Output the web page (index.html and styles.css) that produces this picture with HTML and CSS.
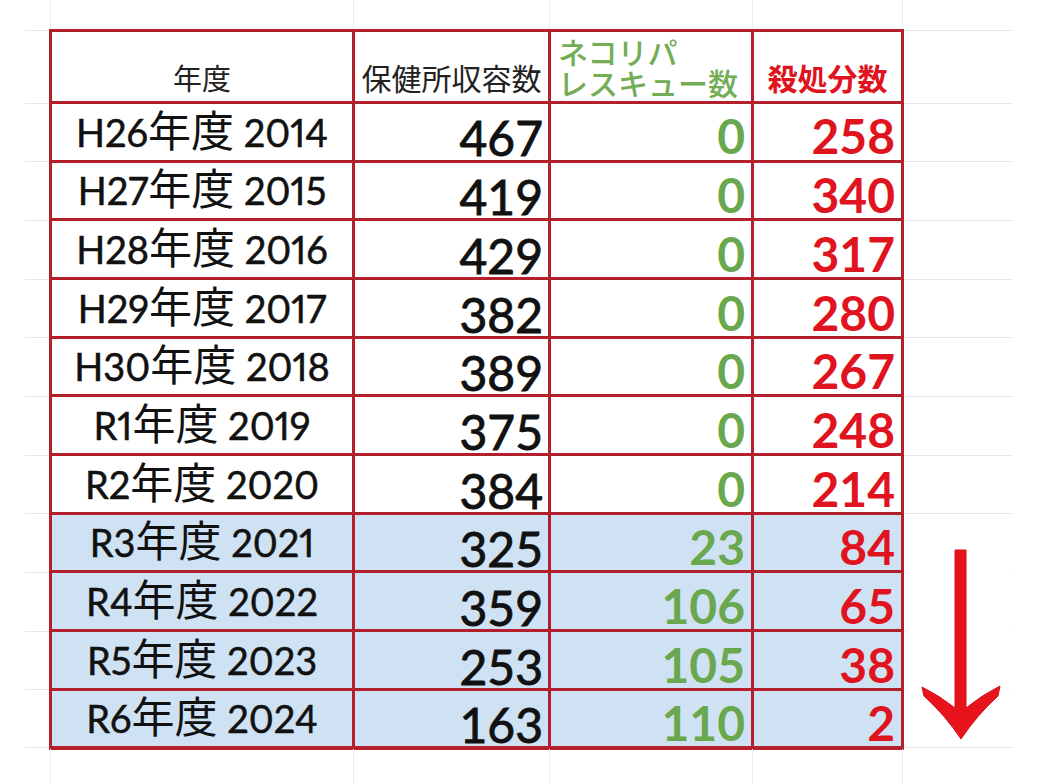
FILE: index.html
```html
<!DOCTYPE html>
<html lang="ja">
<head>
<meta charset="utf-8">
<title>保健所収容数・殺処分数</title>
<link rel="stylesheet" href="styles.css">
</head>
<body>
<div class="sheet">
  <div class="strip strip-top">
    <div class="vl c1"></div><div class="vl c2"></div><div class="vl c3"></div><div class="vl c4"></div>
  </div>
  <div class="middle">
    <div class="gutter gutter-left">
      <div class="gc gh"></div><div class="gc"></div><div class="gc"></div><div class="gc"></div><div class="gc"></div><div class="gc"></div><div class="gc"></div><div class="gc"></div><div class="gc"></div><div class="gc"></div><div class="gc"></div><div class="gc last"></div>
    </div>
    <div class="table">
      <div class="cell head h-year"><span>年度</span></div>
      <div class="cell head h-shelter"><span>保健所収容数</span></div>
      <div class="cell head h-rescue"><div class="wrap"><div>ネコリパ</div><div>レスキュー数</div></div></div>
      <div class="cell head h-killed"><span>殺処分数</span></div>

      <div class="cell yr"><span>H26<span class="k">年度</span> 2014</span></div><div class="cell num"><span>467</span></div><div class="cell num g"><span>0</span></div><div class="cell num r"><span>258</span></div>
      <div class="cell yr"><span>H27<span class="k">年度</span> 2015</span></div><div class="cell num"><span>419</span></div><div class="cell num g"><span>0</span></div><div class="cell num r"><span>340</span></div>
      <div class="cell yr"><span>H28<span class="k">年度</span> 2016</span></div><div class="cell num"><span>429</span></div><div class="cell num g"><span>0</span></div><div class="cell num r"><span>317</span></div>
      <div class="cell yr"><span>H29<span class="k">年度</span> 2017</span></div><div class="cell num"><span>382</span></div><div class="cell num g"><span>0</span></div><div class="cell num r"><span>280</span></div>
      <div class="cell yr"><span>H30<span class="k">年度</span> 2018</span></div><div class="cell num"><span>389</span></div><div class="cell num g"><span>0</span></div><div class="cell num r"><span>267</span></div>
      <div class="cell yr"><span>R1<span class="k">年度</span> 2019</span></div><div class="cell num"><span>375</span></div><div class="cell num g"><span>0</span></div><div class="cell num r"><span>248</span></div>
      <div class="cell yr"><span>R2<span class="k">年度</span> 2020</span></div><div class="cell num"><span>384</span></div><div class="cell num g"><span>0</span></div><div class="cell num r"><span>214</span></div>
      <div class="cell yr blue"><span>R3<span class="k">年度</span> 2021</span></div><div class="cell num blue"><span>325</span></div><div class="cell num g blue"><span>23</span></div><div class="cell num r blue"><span>84</span></div>
      <div class="cell yr blue"><span>R4<span class="k">年度</span> 2022</span></div><div class="cell num blue"><span>359</span></div><div class="cell num g blue"><span>106</span></div><div class="cell num r blue"><span>65</span></div>
      <div class="cell yr blue"><span>R5<span class="k">年度</span> 2023</span></div><div class="cell num blue"><span>253</span></div><div class="cell num g blue"><span>105</span></div><div class="cell num r blue"><span>38</span></div>
      <div class="cell yr blue"><span>R6<span class="k">年度</span> 2024</span></div><div class="cell num blue"><span>163</span></div><div class="cell num g blue"><span>110</span></div><div class="cell num r blue"><span>2</span></div>
    </div>
    <div class="gutter gutter-right">
      <div class="gc gh"></div><div class="gc"></div><div class="gc"></div><div class="gc"></div><div class="gc"></div><div class="gc"></div><div class="gc"></div><div class="gc"></div><div class="gc"></div><div class="gc"></div><div class="gc"></div><div class="gc last"></div>
      <svg class="arrow" width="106" height="231" viewBox="0 0 106 231" aria-hidden="true">
        <rect x="0" y="0" width="106" height="231" fill="#ffffff"/>
        <path d="M49 35 L60 35 L60 193 Q76 180 94 171 L92 181 Q71 200 55 224 Q39 200 18 181 L16 172 Q34 181 49 193 Z" fill="#e8141c" stroke="#d0101a" stroke-width="1" stroke-linejoin="round"/>
      </svg>
    </div>
  </div>
  <div class="strip strip-bottom">
    <div class="vl c1"></div><div class="vl c2"></div><div class="vl c3"></div><div class="vl c4"></div>
  </div>
</div>
</body>
</html>
```

FILE: styles.css
```css
html, body {
  margin: 0;
  padding: 0;
  background: #ffffff;
}

body {
  width: 1040px;
  height: 784px;
  overflow: hidden;
  font-family: "Lato", "Noto Sans CJK JP", sans-serif;
  color: #111111;
}

.sheet {
  display: flex;
  flex-direction: column;
}

/* faint spreadsheet gridlines above / below the table */
.strip {
  display: flex;
  margin-left: 50px;
}
.strip-top { height: 29px; }
.strip-bottom { height: 35px; }

.vl {
  box-sizing: border-box;
  height: 100%;
  border-left: 1px solid #ececec;
}
.vl.c1 { width: 303px; }
.vl.c2 { width: 196px; }
.vl.c3 { width: 203px; }
.vl.c4 { width: 151px; border-right: 1px solid #ececec; }

.middle {
  display: flex;
  margin-left: 25px;
  height: 720px;
}

.gutter {
  display: grid;
  grid-template-rows: 72.5px repeat(11, 58.68px);
  align-content: start;
  padding-top: 1px;
}
.gutter-left { width: 24px; }
.gutter-right {
  width: 109px;
  position: relative;
}

.gc {
  box-sizing: border-box;
  border-top: 1px solid #e9e9e9;
}
.gc.last {
  border-bottom: 1px solid #e9e9e9;
}

.arrow {
  position: absolute;
  left: 2px;
  top: 486px;
  display: block;
}

/* the table */
.table {
  display: grid;
  grid-template-columns: 300px 193px 200px 147px;
  grid-template-rows: 69px repeat(11, 55.68px);
  gap: 3px;
  padding: 3px;
  background: #b3202c;
  width: 849px;
  height: 714.5px;
}

.cell {
  background: #ffffff;
  display: flex;
  align-items: flex-end;
  box-sizing: border-box;
}
.cell.blue { background: #cfe2f3; }

.head {
  font-family: "Noto Sans CJK JP", sans-serif;
  font-size: 29px;
  line-height: 1;
  justify-content: center;
  padding-bottom: 9px;
  color: #222222;
}
.h-shelter { font-size: 30px; }
.h-killed {
  font-size: 30px;
  font-weight: 700;
  color: #e0141e;
}
.h-rescue {
  justify-content: flex-start;
  padding: 0 0 4px 7px;
  font-size: 30px;
  font-weight: 500;
  color: #74ad55;
}
.h-rescue .wrap {
  display: flex;
  flex-direction: column;
  gap: 1px;
  line-height: 30px;
}

.yr {
  justify-content: center;
  font-size: 38px;
  line-height: 1;
  padding-bottom: 9px;
  font-variant-numeric: proportional-nums;
  -webkit-text-stroke: 0.5px #111111;
}
.yr .k {
  font-family: "Noto Sans CJK JP", sans-serif;
  font-size: 43px;
  -webkit-text-stroke: 0;
}

.num {
  justify-content: flex-end;
  font-size: 48px;
  line-height: 0.9;
  padding-right: 5px;
  -webkit-text-stroke: 0.9px #111111;
}
.num.g, .num.r {
  font-weight: 700;
  padding-right: 6px;
  padding-bottom: 2px;
  -webkit-text-stroke: 0;
}
.num.g { color: #6aa84f; }
.num.r { color: #e0141e; }
```
